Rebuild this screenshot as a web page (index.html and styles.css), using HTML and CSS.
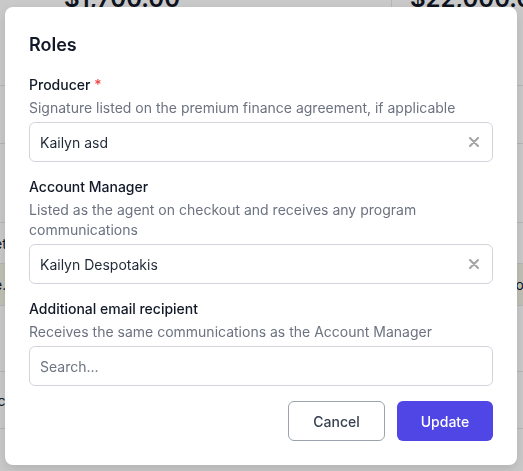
FILE: index.html
```html
<!DOCTYPE html>
<html lang="en">
<head>
    <meta charset="UTF-8">
    <meta name="viewport" content="width=device-width, initial-scale=1.0">
    <title>Roles</title>
    <link rel="stylesheet" href="styles.css">
</head>
<body>
    <!-- page behind the dialog -->
    <div class="page">
        <div class="stats">
            <div class="stat stat-left"><span class="stat-value">$1,700.00</span></div>
            <div class="stat stat-right"><span class="stat-value">$22,000.00</span></div>
        </div>
        <div class="row row-a"></div>
        <div class="row row-b"></div>
        <div class="row row-c"><span class="frag">et</span></div>
        <div class="row row-d row-beige"><span class="frag">e.</span><span class="frag">of</span></div>
        <div class="row row-e"></div>
        <div class="row row-f"><span class="frag">ic</span></div>
    </div>

    <div class="overlay">
        <div class="modal">
            <h2 class="modal-title">Roles</h2>

            <div class="field">
                <label class="field-label">Producer <span class="required">*</span></label>
                <p class="field-help">Signature listed on the premium finance agreement, if applicable</p>
                <div class="select">
                    <span class="select-value">Kailyn asd</span>
                    <svg class="clear-icon" width="10" height="10" viewBox="0 0 10 10"><path d="M1 1L9 9M9 1L1 9" stroke="currentColor" stroke-width="2" stroke-linecap="round"/></svg>
                </div>
            </div>

            <div class="field">
                <label class="field-label">Account Manager</label>
                <p class="field-help">Listed as the agent on checkout and receives any program communications</p>
                <div class="select">
                    <span class="select-value">Kailyn Despotakis</span>
                    <svg class="clear-icon" width="10" height="10" viewBox="0 0 10 10"><path d="M1 1L9 9M9 1L1 9" stroke="currentColor" stroke-width="2" stroke-linecap="round"/></svg>
                </div>
            </div>

            <div class="field">
                <label class="field-label">Additional email recipient</label>
                <p class="field-help">Receives the same communications as the Account Manager</p>
                <div class="select">
                    <span class="select-placeholder">Search...</span>
                </div>
            </div>

            <div class="modal-actions">
                <button type="button" class="btn btn-secondary">Cancel</button>
                <button type="button" class="btn btn-primary">Update</button>
            </div>
        </div>
    </div>
</body>
</html>
```

FILE: styles.css
```css
/* base */
body {
    margin: 0;
    font-family: Inter, "Noto Sans", sans-serif;
    color: #111827;
    background: #fff;
    overflow: hidden;
}

/* page behind the dialog */
.page {
    width: 523px;
    height: 471px;
    overflow: hidden;
}

.stats {
    display: flex;
    height: 85px;
    border-bottom: 1px solid #e5e7eb;
}

.stat {
    overflow: hidden;
}

.stat-left {
    width: 392px;
    border-right: 1px solid #e5e7eb;
    padding-left: 64px;
    box-sizing: border-box;
}

.stat-right {
    flex: 1;
    padding-left: 18px;
    white-space: nowrap;
}

.stat-value {
    display: block;
    margin-top: -17px;
    font-size: 24px;
    line-height: 32px;
    font-weight: 600;
}

.row {
    display: flex;
    justify-content: space-between;
    align-items: center;
    border-bottom: 1px solid #e5e7eb;
    font-size: 14px;
    overflow: hidden;
}

.row-a { height: 57px; }
.row-b { height: 78px; }
.row-c { height: 40px; }
.row-d { height: 41px; }
.row-e { height: 65px; }
.row-f { height: 56px; }

.row-beige {
    background: #f5f3e6;
}

.frag {
    margin: 0 -6px;
}

/* dialog */
.overlay {
    position: fixed;
    inset: 0;
    background: rgba(0, 0, 0, 0.21);
}

.modal {
    position: absolute;
    left: 5px;
    top: 7px;
    width: 512px;
    box-sizing: border-box;
    padding: 24px;
    background: #fff;
    border-radius: 8px;
    box-shadow: 0 4px 12px rgba(0, 0, 0, 0.12);
}

.modal-title {
    margin: 0 0 16px;
    font-size: 18px;
    line-height: 28px;
    font-weight: 600;
}

.field {
    margin-bottom: 15px;
}

.field-label {
    display: block;
    font-size: 14px;
    line-height: 20px;
    font-weight: 500;
    margin-bottom: 3px;
}

.required {
    color: #ef4444;
}

.field-help {
    margin: 0 0 4px;
    font-size: 14px;
    line-height: 20px;
    color: #6b7280;
}

.select {
    display: flex;
    align-items: center;
    justify-content: space-between;
    height: 40px;
    box-sizing: border-box;
    padding: 0 13px 0 10px;
    border: 1px solid #d1d5db;
    border-radius: 6px;
    font-size: 14px;
}

.select-value {
    color: #1f2937;
}

.select-placeholder {
    color: #6b7280;
}

.clear-icon {
    color: #a3a3a3;
}

.modal-actions {
    display: flex;
    justify-content: flex-end;
    gap: 12px;
}

.btn {
    height: 40px;
    padding: 0 20px;
    border-radius: 6px;
    font-family: inherit;
    font-size: 14px;
    font-weight: 500;
    cursor: pointer;
}

.btn-secondary {
    width: 97px;
    background: #fff;
    color: #374151;
    border: 1px solid #9ca3af;
}

.btn-primary {
    width: 96px;
    background: #4f46e5;
    color: #fff;
    border: none;
}
```
